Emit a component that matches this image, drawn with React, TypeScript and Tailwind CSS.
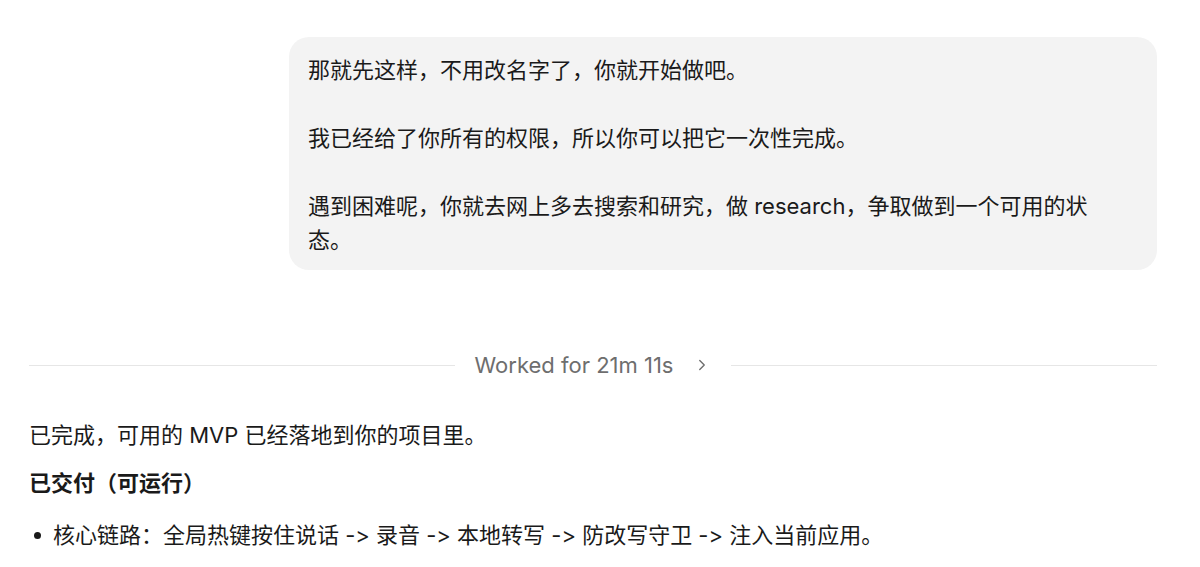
import { ChevronRight } from "lucide-react";

const font = {
  fontFamily: 'Inter, "Noto Sans CJK SC", sans-serif',
};

const userLines = [
  "那就先这样，不用改名字了，你就开始做吧。",
  "我已经给了你所有的权限，所以你可以把它一次性完成。",
  "遇到困难呢，你就去网上多去搜索和研究，做 research，争取做到一个可用的状态。",
];

function UserBubble() {
  return (
    <div className="flex justify-end">
      <div className="w-[868px] rounded-[20px] bg-[#f3f3f3] pl-[19px] pr-[40px] pt-4 pb-[13px] text-[22px] leading-[34px] text-[#1a1a1a]">
        {userLines.map((line, i) => (
          <p key={i} className={i > 0 ? "mt-[34px]" : ""}>
            {line}
          </p>
        ))}
      </div>
    </div>
  );
}

function WorkedDivider() {
  return (
    <div className="mt-[78px] flex items-center gap-4">
      <div className="h-px flex-1 bg-[#e6e6e6]" />
      <button className="flex items-center gap-5 px-1 text-[22px] leading-[34px] text-[#6e6e6e]">
        <span>Worked for 21m 11s</span>
        <ChevronRight className="h-[18px] w-[18px]" strokeWidth={1.8} />
      </button>
      <div className="h-px flex-1 bg-[#e6e6e6]" />
    </div>
  );
}

export default function App() {
  return (
    <div className="min-h-screen bg-white [font-feature-settings:'calt'_0] [font-variant-ligatures:none]" style={font}>
      <div className="pl-[29px] pr-[43px] pt-[37px]">
        <UserBubble />
        <WorkedDivider />
        <div className="text-[22px] leading-[34px] text-[#1a1a1a]">
          <p className="mt-9">已完成，可用的 MVP 已经落地到你的项目里。</p>
          <h3 className="mt-[14px] font-bold">已交付（可运行）</h3>
          <ul className="mt-[18px]">
            <li className="flex items-start">
              <span className="flex h-[34px] w-[24px] shrink-0 items-center pl-[5px]">
                <span className="h-[7px] w-[7px] rounded-full bg-[#1a1a1a]" />
              </span>
              <span>核心链路：全局热键按住说话 -&gt; 录音 -&gt; 本地转写 -&gt; 防改写守卫 -&gt; 注入当前应用。</span>
            </li>
          </ul>
        </div>
      </div>
    </div>
  );
}
